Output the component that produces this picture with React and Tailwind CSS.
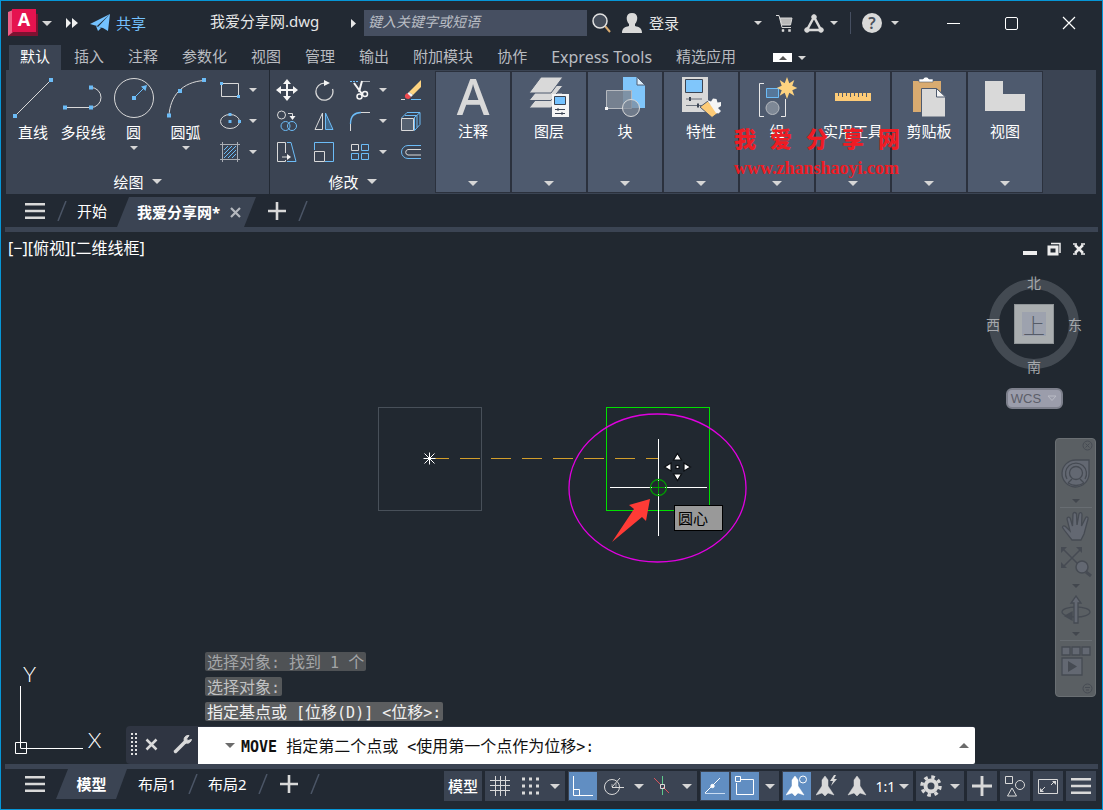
import React, { useState } from 'react';

const Caret = ({ size = 'sm', up = false, className = 'text-[#d6d6d6]' }) => {
  const w = size === 'lg' ? 10 : 8;
  const h = w / 2;
  return (
    <svg width={w} height={h} viewBox="0 0 10 5" fill="currentColor" className={`shrink-0 ${className}`} aria-hidden="true">
      <path d={up ? 'M5 0L10 5H0z' : 'M0 0H10L5 5z'} />
    </svg>
  );
};

const CaretButton = ({ label, size, className = '' }) => (
  <button type="button" aria-label={label} className={`flex items-center justify-center ${className}`}>
    <Caret size={size} />
  </button>
);

const Icon = ({ size = 22, children }) => (
  <svg width={size} height={size} viewBox={`0 0 ${size} ${size}`} fill="none" stroke="#d9d9d9" className="shrink-0" aria-hidden="true">
    {children}
  </svg>
);

const Menu = () => (
  <svg width="20" height="16" fill="#d9d9d9" aria-hidden="true">
    <path d="M0 0h20v2.500H0zM0 6.700h20v2.500H0zM0 13.500h20V16H0z" />
  </svg>
);

const Plus = ({ size = 18 }) => (
  <svg width={size} height={size} viewBox="0 0 18 18" fill="#d9d9d9" aria-hidden="true">
    <path d="M7.700 0h2.600v18H7.700zM0 7.700h18v2.600H0z" />
  </svg>
);

const Slash = () => (
  <svg width="10" height="20" stroke="#4b5566" strokeWidth="1.5" className="shrink-0" aria-hidden="true">
    <path d="M1 20L9 0" />
  </svg>
);

const blue = '#6cbcf7';

/* ---------- ribbon icons ---------- */

const drawTools = [
  {
    name: '直线',
    width: 'w-[46px]',
    icon: (
      <Icon size={40}>
        <path d="M2 38L38 2" />
        <path d="M0 36h4v4H0zM36 0h4v4h-4z" fill={blue} stroke="none" />
      </Icon>
    ),
  },
  {
    name: '多段线',
    width: 'w-[54px]',
    icon: (
      <Icon size={40}>
        <path d="M2 29.5H28A9.8 9.8 0 0 0 28 9.5" />
        <path d="M0 27.500h4v4H0zM26 27.500h4v4h-4zM26 7.500h4v4h-4z" fill={blue} stroke="none" />
      </Icon>
    ),
  },
  {
    name: '圆',
    width: 'w-[47px]',
    more: true,
    icon: (
      <Icon size={40}>
        <circle cx="20" cy="20" r="19.500" />
        <path d="M20 20L31 9" stroke={blue} />
        <path d="M18 18h4v4h-4zM33 7l-1.500 6L27 8.500z" fill={blue} stroke="none" />
      </Icon>
    ),
  },
  {
    name: '圆弧',
    width: 'w-[57px]',
    more: true,
    icon: (
      <Icon size={40}>
        <path d="M3 38C4 18 16 4 38 2.500" />
        <path d="M1 35.500h4v4H1zM12 11h4v4h-4zM36 0h4v4h-4z" fill={blue} stroke="none" />
      </Icon>
    ),
  },
];

const smallDraw = [
  {
    name: '矩形',
    icon: (
      <Icon>
        <path d="M2.500 4.500h17v13h-17z" />
        <path d="M1 3h3v3H1zM18 16h3v3h-3z" fill={blue} stroke="none" />
      </Icon>
    ),
  },
  {
    name: '椭圆',
    icon: (
      <Icon>
        <ellipse cx="11" cy="11.500" rx="9.500" ry="7" />
        <path d="M9.500 3h3v3h-3zM9.500 10h3v3h-3zM19 10h3v3h-3z" fill={blue} stroke="none" />
      </Icon>
    ),
  },
  {
    name: '图案填充',
    icon: (
      <Icon>
        <path d="M5 9l4-4M5 13L13 5M5 17L17 5M9 17l8-8M13 17l4-4" stroke={blue} />
        <path d="M3.500 1v20M18.500 1v20M1 3.500h20M1 18.500h20" stroke="#a9adb3" />
      </Icon>
    ),
  },
];

const modifyTools = [
  {
    name: '移动',
    icon: (
      <Icon>
        <path d="M11 3v16M3 11h16" stroke="#f5f5f5" strokeWidth="2" />
        <path d="M11 0l4 5H7zM11 22l4-5H7zM0 11l5-4v8zM22 11l-5-4v8z" fill="#f5f5f5" stroke="none" />
      </Icon>
    ),
  },
  {
    name: '旋转',
    icon: (
      <Icon>
        <path d="M12 4.200A8.500 8.500 0 1 0 19.500 10" strokeWidth="1.300" />
        <path d="M11 1l6 3-6 3z" fill="#f5f5f5" stroke="none" />
      </Icon>
    ),
  },
  {
    name: '修剪',
    more: true,
    icon: (
      <Icon>
        <path d="M1 2.500h9" stroke={blue} strokeDasharray="2 1" />
        <path d="M13 2.500h8" stroke="#a9adb3" />
        <path d="M5 4l8 11M13 2l-3 11" stroke="#f5f5f5" strokeWidth="2" />
        <circle cx="10.500" cy="17.500" r="2.500" stroke="#f5f5f5" strokeWidth="1.500" />
        <circle cx="16" cy="15" r="2.500" stroke="#f5f5f5" strokeWidth="1.500" />
      </Icon>
    ),
  },
  {
    name: '删除',
    icon: (
      <Icon>
        <path d="M9 13L21 1v7l-8 8z" fill="#fdd380" stroke="none" />
        <path d="M9 13l4 3-2 2-4-3z" fill="#f5f5f5" stroke="none" />
        <path d="M7 14l4 4-2 2q-5 0-4-4z" fill="#ef4a4f" stroke="none" />
        <path d="M1 20.500h4" />
        <path d="M11 20.500h10" stroke={blue} />
      </Icon>
    ),
  },
  {
    name: '复制',
    icon: (
      <Icon>
        <circle cx="5.500" cy="5" r="4" />
        <circle cx="9.500" cy="16" r="4.500" stroke={blue} />
        <circle cx="16" cy="16" r="4.500" stroke={blue} />
        <path d="M12 3.500h4.500V7" />
        <path d="M13.500 6h6l-3 4z" fill="#f5f5f5" stroke="none" />
      </Icon>
    ),
  },
  {
    name: '镜像',
    icon: (
      <Icon>
        <path d="M9.500 3v16.500H2z" />
        <path d="M12.500 3v16.500H20z" stroke={blue} fill="#41688a" />
      </Icon>
    ),
  },
  {
    name: '圆角',
    more: true,
    icon: (
      <Icon>
        <path d="M1.500 14C1.500 6 6 2.500 12 2.500" stroke={blue} strokeWidth="1.300" />
        <path d="M1.500 14v7M12 2.500h9" />
      </Icon>
    ),
  },
  {
    name: '分解',
    icon: (
      <Icon>
        <path d="M1.500 8.500h12v12h-12z" fill="#54606f" />
        <path d="M1.500 8L7 2.500h13L14 8M20 2.500v12l-5.500 6V8M5 5.500h12v12" stroke={blue} />
      </Icon>
    ),
  },
  {
    name: '拉伸',
    icon: (
      <Icon>
        <path d="M9.500 12V1.500h-8v19h8V19M6 16h6" />
        <path d="M11 1.500h4l5 19h-9" stroke={blue} />
        <path d="M11 13l4 3-4 3z" fill="#f5f5f5" stroke="none" />
      </Icon>
    ),
  },
  {
    name: '缩放',
    icon: (
      <Icon>
        <path d="M1.500 9V1.500h19v19H12" stroke={blue} />
        <path d="M1.500 10.500h10v10h-10z" />
      </Icon>
    ),
  },
  {
    name: '阵列',
    more: true,
    icon: (
      <Icon>
        <path d="M2.500 3.500h7v6h-7z" />
        <path d="M12.500 3.500h7v6h-7zM2.500 12.500h7v6h-7zM12.500 12.500h7v6h-7z" stroke={blue} />
      </Icon>
    ),
  },
  {
    name: '偏移',
    icon: (
      <Icon>
        <path d="M21 4.500H8a6.500 6.500 0 0 0 0 13h13" stroke={blue} />
        <path d="M21 8.500H8a2.800 2.800 0 0 0 0 5.500h13" />
      </Icon>
    ),
  },
];

const panels = [
  {
    name: '注释',
    icon: (
      <text x="20" y="38" textAnchor="middle" fill="#d9d9d9" fontFamily="Noto Sans, sans-serif" fontWeight="500" fontSize="50">A</text>
    ),
  },
  {
    name: '图层',
    icon: (
      <>
        <path d="M12 16h22L22 31H0z" fill="#d9d9d9" stroke="#4e5a6e" />
        <path d="M12 8.500h22L22 23.500H0z" fill="#d9d9d9" stroke="#4e5a6e" />
        <path d="M12 0h22L22 16H0z" fill="#d9d9d9" stroke="#4e5a6e" />
        <path d="M23 17h17v23H23z" fill="#f5f5f5" />
        <path d="M25.500 19.500h11v8h-11z" fill="#74c2ff" stroke="#3b4453" />
        <path d="M26 32.500h10M26 36.500h10M29 31v3M33 35v3" stroke="#3b4453" />
      </>
    ),
  },
  {
    name: '块',
    icon: (
      <>
        <path d="M18 0h14l8 8v23H18z" fill="#80c6fb" />
        <path d="M32 0v8h8z" fill="#dceefc" stroke="#4e5a6e" />
        <path d="M1.500 13.500h25v18h-25z" fill="#7e8896" fillOpacity=".85" stroke="#b5b9bf" />
        <circle cx="26" cy="31" r="8.500" fill="#7e8896" fillOpacity=".7" stroke="#d9d9d9" />
        <path d="M0 30h3v3H0z" fill="#f5f5f5" />
      </>
    ),
  },
  {
    name: '特性',
    icon: (
      <>
        <path d="M1 0h26v35H1z" fill="#d9d9d9" />
        <path d="M4.500 2.500h17v13h-17z" fill="#80c6fb" stroke="#3b4453" />
        <path d="M5 22h16M5 28.500h16" stroke="#6a717c" />
        <path d="M9 20v4M17 26.500v4" stroke="#3b4453" strokeWidth="2" />
        <path d="M19 30l8-6 10 12-6 4.500z" fill="#fdcb77" stroke="#4e5a6e" />
        <path d="M26 23l4 1.500 2-3 3.500.5 1 3.500 3.500-.5v4l-3 2 3 3-2.500 2.500-2.500-.5z" fill="#f5f5f5" />
      </>
    ),
  },
  {
    name: '组',
    icon: (
      <>
        <path d="M7 6.500H2.500v33H7M24 39.500h4.500V22" stroke="#e8e8e8" fill="none" />
        <path d="M9.500 11.500h12v9h-12z" fill="#56779a" stroke={blue} />
        <circle cx="15.500" cy="31" r="6.500" fill="#7e8896" stroke="#b5b9bf" />
        <path d="M30 0l2.300 6.200 5-3.200-2 5.700 5 2.300-5 2.300 2 5.400-5-3L30 22l-2.300-6.300-5 3 2-5.400-5-2.300 5-2.300-2-5.700 5 3.200z" fill="#fdd380" />
      </>
    ),
  },
  {
    name: '实用工具',
    icon: (
      <>
        <path d="M2 16h36v8H2z" fill="#fdcb77" />
        <path d="M5.500 16v3M9.500 16v4M13.500 16v3M17.500 16v4M21.500 16v3M25.500 16v4M29.500 16v3M33.500 16v4" stroke="#4e5a6e" />
      </>
    ),
  },
  {
    name: '剪贴板',
    icon: (
      <>
        <path d="M4 4h28v31H4z" fill="#d9ab70" />
        <path d="M10 5V2h4q3-4 6 0h4v3z" fill="#fff" stroke="#4e5a6e" strokeWidth=".6" />
        <path d="M12.500 11.500h15l9 8.500v20h-24z" fill="#d9d9d9" stroke="#4e5a6e" />
        <path d="M27.500 11.500v8.500h9z" fill="#f5f5f5" stroke="#4e5a6e" />
      </>
    ),
  },
  {
    name: '视图',
    icon: <path d="M0 4h18v13h22v17H0z" fill="#d9d9d9" />,
  },
];

const menuTabs = ['默认', '插入', '注释', '参数化', '视图', '管理', '输出', '附加模块', '协作', 'Express Tools', '精选应用'];

/* ---------- window sections ---------- */

const TitleBar = () => (
  <header className="flex h-11 items-center pl-[7px] pr-1 text-[15px] text-[#e6e6e6]">
    <button type="button" aria-label="应用程序菜单" className="flex items-center">
      <svg width="30" height="28" className="overflow-visible" aria-hidden="true">
        <path d="M4 2L30 5v22H0z" fill="#7d1231" />
        <path d="M0 3l5-2v22l-5 4z" fill="#f06088" />
        <path d="M4 0h24v23H4z" fill="#e5134f" />
        <text x="16" y="17" textAnchor="middle" fill="#fff" fontFamily="Open Sans, sans-serif" fontWeight="700" fontSize="18">A</text>
      </svg>
      <span className="ml-1"><Caret size="lg" /></span>
    </button>
    <button type="button" aria-label="快速访问工具栏" className="ml-3.5">
      <svg width="12" height="10" fill="#f0f0f0" aria-hidden="true"><path d="M0 0l5 5-5 5zM6 0l6 5-6 5z" /></svg>
    </button>
    <button type="button" className="ml-3 flex items-center gap-1.5 text-[#74c2ff]">
      <svg width="20" height="18" fill="#74c2ff" aria-hidden="true">
        <path d="M0 10L20 0 7 12zM8 13L20 0l-2 17-5-3zM6 12l2 5 3-3z" />
      </svg>
      共享
    </button>
    <h1 className="-mt-1 ml-16 w-[113px] text-[15px]">我爱分享网.dwg</h1>
    <button type="button" aria-label="展开搜索" className="ml-7">
      <svg width="5" height="9" fill="#e6e6e6" aria-hidden="true"><path d="M0 0l5 4.500L0 9z" /></svg>
    </button>
    <input
      type="search"
      aria-label="搜索"
      placeholder="键入关键字或短语"
      className="ml-2 h-[26px] w-[223px] bg-[#464f61] px-1 pb-1 text-[14px] italic text-white outline-none placeholder:text-[#b9bdc4]"
    />
    <button type="button" aria-label="查找" className="ml-[5px]">
      <svg width="20" height="20" fill="none" aria-hidden="true">
        <path d="M13 13l5 6" stroke="#d9ab70" strokeWidth="2" />
        <circle cx="8" cy="8" r="7" fill="#454d5a" stroke="#e0e0e0" strokeWidth="1.500" />
      </svg>
    </button>
    <button type="button" className="ml-2.5 flex items-center gap-[7px]">
      <svg width="20" height="20" fill="#d9d9d9" aria-hidden="true">
        <path d="M10 0c7 0 6 8 3 11v2c4 1 7 2 7 7H0c0-5 3-6 7-7v-2C4 8 3 0 10 0z" />
      </svg>
      登录
    </button>
    <div className="ml-auto flex items-center">
      <CaretButton label="登录选项" />
      <button type="button" aria-label="购物车" className="ml-[14px]">
        <svg width="17" height="18" fill="none" stroke="#d9d9d9" aria-hidden="true">
          <path d="M0 1.500h3l3 12h9" />
          <path d="M4 4h12l-1.500 7H6z" fill="#b9b9b9" />
          <path d="M6 15.500h2v2H6zM12.500 15.500h2v2h-2z" fill="#d9d9d9" strokeWidth=".5" />
        </svg>
      </button>
      <button type="button" aria-label="Autodesk App Store" className="ml-[11px]">
        <svg width="20" height="19" fill="#d9d9d9" stroke="#d9d9d9" aria-hidden="true">
          <path d="M10 3L3 16h14z" fill="none" strokeWidth="2.500" />
          <circle cx="10" cy="3" r="2.300" /><circle cx="3" cy="16" r="2.300" /><circle cx="17" cy="16" r="2.300" />
        </svg>
      </button>
      <CaretButton label="App Store 选项" className="ml-1.5" />
      <span className="ml-3 h-[22px] w-px bg-[#464f61]" />
      <button type="button" aria-label="帮助" className="ml-[11px] flex size-5 items-center justify-center rounded-full bg-[#d9d9d9] text-[16px] font-semibold text-[#4a505b]">?</button>
      <CaretButton label="帮助选项" className="ml-[9px]" />
    </div>
    <div className="ml-[25px] flex">
      <button type="button" aria-label="最小化" className="flex w-[58px] items-center justify-center"><span className="h-px w-[13px] bg-white" /></button>
      <button type="button" aria-label="最大化" className="flex w-[58px] items-center justify-center"><span className="size-[13px] rounded-xs border border-white" /></button>
      <button type="button" aria-label="关闭" className="flex w-[58px] items-center justify-center">
        <svg width="14" height="14" stroke="#fff" strokeWidth="1.200" aria-hidden="true"><path d="M1 1l12 12M13 1L1 13" /></svg>
      </button>
    </div>
  </header>
);

const MenuTabs = ({ active, onSelect }) => (
  <nav className="flex h-[25px] items-center gap-0.5 pl-2">
    {menuTabs.map((tab) => (
      <button
        key={tab}
        type="button"
        onClick={() => onSelect(tab)}
        className={`h-full whitespace-nowrap px-[11px] pb-0.5 ${/^[A-Z]/.test(tab) ? 'text-[16px]' : 'text-[15px]'} ${
          tab === active ? 'bg-[#3b4453] text-white' : 'text-[#b9bcc1]'
        }`}
      >
        {tab}
      </button>
    ))}
    <button type="button" aria-label="最小化面板" className="ml-6 flex h-[9px] w-[19px] items-center justify-center bg-white">
      <Caret up className="text-[#555]" />
    </button>
    <CaretButton label="面板选项" className="ml-1" />
  </nav>
);

const Ribbon = () => (
  <section className="relative mr-1.5 ml-[5px] flex h-[124px] bg-[#3b4453] text-[15px] leading-5 text-white">
    <div className="flex w-[264px] flex-col border-r border-[#222933]">
      <div className="flex flex-1 pl-1 pt-2">
        {drawTools.map((tool) => (
          <button key={tool.name} type="button" className={`flex flex-col items-center ${tool.width}`}>
            {tool.icon}
            <span className="mt-1 whitespace-nowrap">{tool.name}</span>
            {tool.more && <span className="mt-1 flex"><Caret /></span>}
          </button>
        ))}
        <div className="flex flex-col">
          {smallDraw.map((tool) => (
            <div key={tool.name} className="flex h-[31px]">
              <button type="button" aria-label={tool.name} className="flex w-8 justify-center pt-px">{tool.icon}</button>
              <CaretButton label={`${tool.name}选项`} className="h-6 w-3.5" />
            </div>
          ))}
        </div>
      </div>
      <button type="button" className="flex h-6 items-center justify-center gap-2 pb-0.5">绘图<Caret size="lg" /></button>
    </div>

    <div className="flex w-[165px] flex-col">
      <div className="grid flex-1 grid-cols-[34px_40px_46px_42px] grid-rows-[31px_31px_31px] pt-2">
        {modifyTools.map((tool) => (
          <div key={tool.name} className="flex justify-center">
            <button type="button" aria-label={tool.name} className="flex w-8 justify-center pt-px">{tool.icon}</button>
            {tool.more && <CaretButton label={`${tool.name}选项`} className="h-6 w-3.5" />}
          </div>
        ))}
      </div>
      <button type="button" className="flex h-6 items-center justify-center gap-2 pb-0.5">修改<Caret size="lg" /></button>
    </div>

    {panels.map((panel) => (
      <button key={panel.name} type="button" className="my-px flex w-[76px] flex-col items-center border border-[#2b313d] bg-[#4e5a6e] pt-[5px] pb-1.5">
        <svg width="40" height="40" className="overflow-visible" aria-hidden="true">{panel.icon}</svg>
        <span className="mt-1 whitespace-nowrap">{panel.name}</span>
        <span className="mt-auto"><Caret size="lg" /></span>
      </button>
    ))}

    {/* site stamp */}
    <div className="pointer-events-none absolute top-[54px] left-[728px] text-[#ee1c24]">
      <p className="flex gap-3.5 text-[22px] leading-7 font-black">
        {'我爱分享网'.split('').map((ch) => <span key={ch}>{ch}</span>)}
      </p>
      <p className="mt-1.5 font-['Liberation_Serif',serif] text-[18px] leading-5 font-bold">www.zhanshaoyi.com</p>
    </div>
  </section>
);

const FileTabs = () => (
  <nav className="flex h-[33px] items-center pt-px text-[15px] text-white">
    <button type="button" aria-label="文件菜单" className="ml-6"><Menu /></button>
    <span className="ml-3"><Slash /></span>
    <button type="button" className="ml-2.5">开始</button>
    <div className="ml-2.5 flex h-[30px] w-[139px] items-center self-end bg-[#3b4453] pl-5 font-bold [clip-path:polygon(12px_0,100%_0,127px_100%,0_100%)]">
      <button type="button">我爱分享网*</button>
      <button type="button" aria-label="关闭图形" className="ml-2.5">
        <svg width="11" height="11" stroke="#b4b8be" strokeWidth="2.200" aria-hidden="true"><path d="M1 1l9 9M10 1l-9 9" /></svg>
      </button>
    </div>
    <button type="button" aria-label="新图形" className="ml-3"><Plus /></button>
    <span className="ml-3"><Slash /></span>
  </nav>
);

const Drawing = () => (
  <svg className="absolute inset-0 size-full" fill="none" aria-hidden="true">
    <rect x="377.500" y="175.500" width="103" height="103" stroke="#485059" />
    <path d="M428 226.500H657" stroke="#d29e2b" strokeDasharray="20 11" />
    <path d="M422.500 226.500h12M428.500 220.500v12M423.500 221.500l10 10M433.500 221.500l-10 10" stroke="#fff" />
    <rect x="605.500" y="175.500" width="103" height="103" stroke="#00e000" />
    <ellipse cx="656.500" cy="256" rx="88.500" ry="74" stroke="#e000e0" strokeWidth="1.300" />
    <path d="M657.500 207v97M609 255.500h97" stroke="#fff" />
    <circle cx="657.500" cy="255.500" r="8" stroke="#00a000" strokeWidth="1.300" />
    <path d="M651 255.500h13M657.500 249v13" stroke="#00a000" />
    <path d="M649 267l-21 6 5 4-22 33 30-25 4 4z" fill="#ff3b36" />
    <g fill="#fff" stroke="#0b0e12" strokeWidth="1.200">
      <path d="M676.500 221.500l4 6.500h-8zM676.500 248.500l4-6.500h-8zM663.500 235l6.500-4v8zM689.500 235l-6.500-4v8z" />
      <rect x="675" y="233.500" width="3" height="3" />
    </g>
    {/* ucs axes */}
    <path d="M19.500 454v62M19.500 516.500H82M14.500 510.500h11v11h-11z" stroke="#fff" />
    <g fill="#fff" fontFamily="Lato, sans-serif" fontWeight="300" fontSize="22" textAnchor="middle">
      <text x="28.500" y="450">Y</text>
      <text x="93.500" y="516">X</text>
    </g>
  </svg>
);

const ViewCube = () => (
  <div className="absolute top-10 right-[18px] flex w-[100px] flex-col items-center font-['Noto_Sans_CJK_SC',sans-serif] text-[14px] leading-5 text-[#a5a8ac]">
    <div className="relative grid grid-cols-[18px_64px_18px] grid-rows-[20px_64px_20px] items-center justify-items-center">
      <span className="absolute inset-x-[5px] inset-y-[7px] rounded-full border-10 border-[#434a52]" />
      <button type="button" className="relative col-start-2">北</button>
      <button type="button" className="relative col-start-1 row-start-2">西</button>
      <button type="button" className="relative col-start-2 row-start-2 flex size-10 items-center justify-center border border-[#8f9497] bg-[#aaaeb0] text-[#565c68]">
        <span className="flex size-6 items-center justify-center bg-[#9da2ae] text-[22px] font-light">上</span>
      </button>
      <button type="button" className="relative col-start-3 row-start-2">东</button>
      <button type="button" className="relative col-start-2 row-start-3">南</button>
    </div>
    <button type="button" className="mt-3 flex h-[21px] w-[57px] items-center justify-center gap-1.5 rounded-md border-2 border-[#7d808c] bg-[#9b9dab] font-['Liberation_Sans',sans-serif] text-[13px] text-[#5b5e69]">
      WCS
      <svg width="10" height="7" fill="none" stroke="#b9bbc5" aria-hidden="true"><path d="M1 1h8L5 5.500z" /></svg>
    </button>
  </div>
);

const NavBar = () => (
  <aside className="absolute top-[206px] right-1.5 flex w-[41px] flex-col items-center rounded-sm border border-[#6a6f73] bg-[#5a5f63] text-[#464b53]">
    <button type="button" aria-label="关闭导航栏" className="mt-px mr-0.5 self-end">
      <svg width="11" height="11" fill="none" stroke="currentColor" aria-hidden="true"><circle cx="5.500" cy="5.500" r="4.500" /><path d="M3.500 3.500l4 4M7.500 3.500l-4 4" /></svg>
    </button>
    <button type="button" aria-label="全导航控制盘" className="mt-0.5 flex h-[42px] items-center">
      <svg width="30" height="30" fill="#636872" stroke="currentColor" strokeWidth="1.300" aria-hidden="true">
        <path d="M15 1h13v14A13.500 13.500 0 1 1 15 1z" />
        <path d="M24 20A10.500 10.500 0 1 0 6 20M7 24l4-4M23 24l-4-4M7 24q8 5 16 0" />
        <circle cx="15" cy="14" r="6.500" />
      </svg>
    </button>
    <button type="button" aria-label="控制盘选项" className="flex h-3 items-center"><Caret className="text-[#42474e]" /></button>
    <span className="h-px w-8 bg-[#686d72]" />
    <button type="button" aria-label="平移" className="flex h-9 items-center">
      <svg width="30" height="30" fill="#636872" stroke="currentColor" strokeWidth="1.300" aria-hidden="true">
        <path d="M11 29C8 25 3 19 1.500 16.500c0-2 2-2 3.500-.500l4 4L6 8c0-2 2.500-3 3.500 0l2 7L12 3c0-2 3-2 3.500 0l.5 11 2-11c.5-2 3-2 3 .500L20.500 15l4-8c1-2 3-1 2.500 1l-4 15-3 6z" />
      </svg>
    </button>
    <button type="button" aria-label="范围缩放" className="flex h-9 items-center">
      <svg width="32" height="32" fill="none" stroke="currentColor" strokeWidth="1.500" aria-hidden="true">
        <path d="M3 3l18 18M3 21L21 3" />
        <path d="M1 1h6L1 7zM22 1h-6l6 6zM1 22h6l-6-6z" fill="currentColor" stroke="none" />
        <circle cx="22" cy="21" r="6" fill="#636872" />
        <path d="M26 26l5 4" strokeWidth="3" />
      </svg>
    </button>
    <button type="button" aria-label="缩放选项" className="flex h-3 items-center"><Caret className="text-[#42474e]" /></button>
    <button type="button" aria-label="动态观察" className="flex h-9 items-center">
      <svg width="30" height="30" fill="#636872" stroke="currentColor" strokeWidth="1.300" aria-hidden="true">
        <ellipse cx="15" cy="17" rx="14" ry="5" fill="none" />
        <path d="M13 28V8h-3l5-7 5 7h-3v20z" />
        <path d="M4 21l7-4v8z" fill="currentColor" />
      </svg>
    </button>
    <button type="button" aria-label="动态观察选项" className="flex h-3 items-center"><Caret className="text-[#42474e]" /></button>
    <span className="h-px w-8 bg-[#686d72]" />
    <button type="button" aria-label="ShowMotion" className="flex h-10 items-center">
      <svg width="30" height="30" fill="#636872" stroke="currentColor" strokeWidth="1.300" aria-hidden="true">
        <path d="M1 1h8v8H1zM11 1h8v8h-8zM21 1h8v8h-8zM1 12h20v17H1z" />
        <path d="M7 15l9 5.500L7 26z" fill="currentColor" stroke="none" />
      </svg>
    </button>
    <button type="button" aria-label="自定义导航栏" className="mt-0.5 mr-0.5 mb-0.5 self-end">
      <svg width="11" height="11" fill="none" stroke="currentColor" aria-hidden="true"><circle cx="5.500" cy="5.500" r="4.500" /><path d="M3 4.500h5M4 7h3" /></svg>
    </button>
  </aside>
);

// latin characters use the narrower console face
const ConsoleText = ({ text }) =>
  text.split(/([\u4e00-\u9fff]+)/).map((part, i) =>
    i % 2 ? part : <span key={i} className="font-['DejaVu_Sans_Mono',monospace] text-[15px] whitespace-pre">{part}</span>
  );

const history = [
  { text: '选择对象: 找到 1 个', tone: 'text-[#a3a5a7] bg-[#4f5255]' },
  { text: '选择对象:', tone: 'text-[#c0c1c2] bg-[#55585a]' },
  { text: '指定基点或 [位移(D)] <位移>:', tone: 'text-[#f0f0f0] bg-[#5c5e60]' },
];

const CommandLine = () => (
  <div className="relative mt-auto mr-[127px] ml-[125px] font-['Noto_Sans_CJK_SC',sans-serif] text-[16px]">
    <div className="mb-[5px] ml-[79px] flex flex-col items-start gap-1.5">
      {history.map((line) => (
        <p key={line.text} className={`h-[19px] rounded-xs px-0.5 leading-[18px] whitespace-nowrap ${line.tone}`}>
          <ConsoleText text={line.text} />
        </p>
      ))}
    </div>
    <div className="flex h-[38px] rounded-sm bg-[#2f3542]">
      <div className="flex w-[72px] items-center pb-0.5 pl-[5px]">
        <svg width="7" height="22" fill="none" stroke="#e0e0e0" strokeWidth="2" strokeDasharray="2 2" aria-hidden="true"><path d="M1 0v22M5 0v22" /></svg>
        <button type="button" aria-label="关闭命令行" className="ml-[7px]">
          <svg width="13" height="13" stroke="#d9d9d9" strokeWidth="2.500" aria-hidden="true"><path d="M1.500 1.500l10 10M11.500 1.500l-10 10" /></svg>
        </button>
        <button type="button" aria-label="自定义命令行" className="ml-[15px]">
          <svg width="20" height="20" fill="none" stroke="#d9d9d9" aria-hidden="true">
            <path d="M2.500 17.500L12 8" strokeWidth="3.500" strokeLinecap="round" />
            <path d="M16 1.500c-3-.5-6 2-4.500 6 2 3 6 2 7-2l-3.500 1-1.500-1.500z" fill="#d9d9d9" />
          </svg>
        </button>
      </div>
      <div className="mt-px flex flex-1 items-center rounded-r-xs bg-white pr-1.5 pl-[27px] text-[#111]">
        <button type="button" aria-label="最近使用的命令"><Caret size="lg" className="text-[#6b6b6b]" /></button>
        <label htmlFor="command" className="ml-1.5 whitespace-nowrap">
          <b className="font-['DejaVu_Sans_Mono',monospace] text-[15px]">MOVE</b>
          <ConsoleText text=" 指定第二个点或 <使用第一个点作为位移>:" />
        </label>
        <input id="command" type="text" className="h-full min-w-0 flex-1 bg-transparent pl-2 outline-none" />
        <button type="button" aria-label="命令历史"><Caret size="lg" up className="text-[#6b6b6b]" /></button>
      </div>
    </div>
  </div>
);

const Canvas = () => (
  <main className="relative flex flex-1 flex-col bg-[#212830] text-white">
    <Drawing />
    <div className="relative flex px-[7px] pt-1 text-[16px] leading-6">
      <button type="button">[−]</button>
      <button type="button">[俯视]</button>
      <button type="button">[二维线框]</button>
      <div className="ml-auto flex items-center gap-2.5 pt-0.5 pr-[9px]">
        <button type="button" aria-label="最小化视口" className="flex h-3 w-[14px] items-end"><span className="h-1 w-full bg-[#ededed]" /></button>
        <button type="button" aria-label="还原视口">
          <svg width="15" height="14" fill="none" stroke="#ededed" strokeWidth="2" aria-hidden="true"><path d="M4 1.500h9V11" strokeWidth="1.500" /><path d="M2 5h8v7H2z" strokeWidth="3" /></svg>
        </button>
        <button type="button" aria-label="关闭视口">
          <svg width="14" height="12" stroke="#ededed" strokeWidth="2.500" aria-hidden="true"><path d="M3 2l8 8M11 2l-8 8" /><path d="M1 1h4M9 1h4M1 11h4M9 11h4" strokeWidth="1.500" /></svg>
        </button>
      </div>
    </div>
    <div role="tooltip" className="absolute top-[273px] left-[673px] h-[26px] w-[49px] border border-black bg-[#999] pl-[3px] text-[15px] leading-6 text-black">圆心</div>
    <ViewCube />
    <NavBar />
    <CommandLine />
  </main>
);

const StatusButton = ({ label, active = false, width = 'w-[30px]', children }) => (
  <button type="button" aria-label={label} className={`flex items-center justify-center ${width}`}>
    <span className={`flex size-7 items-center justify-center ${active ? 'bg-[#618ec2]' : ''}`}>{children}</span>
  </button>
);

const Person = ({ x = 0, fill = '#d9d9d9' }) => (
  <path d="M10 0l3 4v6l6 9-6-2-3 3-3-3-6 2 6-9V4z" fill={fill} stroke={fill} strokeWidth=".5" transform={`translate(${x} 1)`} />
);

const StatusBar = () => (
  <footer className="flex h-10 text-[15px] text-white">
    <nav className="flex h-[30px] items-center">
      <button type="button" aria-label="布局菜单" className="ml-6"><Menu /></button>
      <button type="button" className="ml-[11px] h-full w-[71px] bg-[#3b4453] font-bold [clip-path:polygon(12px_0,100%_0,60px_100%,0_100%)]">模型</button>
      <button type="button" className="ml-[11px] w-10 text-left whitespace-nowrap">布局1</button>
      <span className="ml-2.5"><Slash /></span>
      <button type="button" className="ml-2.5 w-10 text-left whitespace-nowrap">布局2</button>
      <span className="ml-2.5"><Slash /></span>
      <button type="button" aria-label="新建布局" className="ml-3"><Plus /></button>
      <span className="ml-3"><Slash /></span>
    </nav>
    <div className="mt-0.5 ml-auto flex h-[30px] gap-[3px] pr-1.5">
      <button type="button" className="w-[38px] bg-[#3b4453] font-medium">模型</button>
      <div className="flex w-20 bg-[#3b4453]">
        <StatusButton label="栅格"><Icon><path d="M6.500 1v20M11.500 1v20M16.500 1v20M1 5.500h20M1 10.500h20M1 15.500h20" /></Icon></StatusButton>
        <StatusButton label="捕捉">
          <Icon><path d="M3 4h17M3 11h17M3 18h17" strokeWidth="3" strokeDasharray="3 4" /></Icon>
        </StatusButton>
        <CaretButton label="捕捉选项" size="lg" className="w-5" />
      </div>
      <div className="flex w-[129px] bg-[#3b4453]">
        <StatusButton label="正交" active><Icon><path d="M1.500 1v19.500H21M1.500 14.500h6v6" stroke="#fff" /></Icon></StatusButton>
        <StatusButton label="极轴追踪" width="w-8"><Icon><circle cx="9" cy="12" r="7.500" /><path d="M9 12.500h12M9 12l8-9" /><path d="M9 12V9M13 12V8" strokeWidth=".7" /></Icon></StatusButton>
        <CaretButton label="极轴选项" size="lg" className="w-[18px]" />
        <StatusButton label="等轴测草图" width="w-7"><Icon><path d="M3 3l7 7M12 12l6 6" stroke="#d9545c" /><path d="M11.500 1v8M11.500 13v7" stroke="#5fc98c" /><path d="M9.500 9.500h4v4h-4z" /></Icon></StatusButton>
        <CaretButton label="草图选项" size="lg" className="w-[21px]" />
      </div>
      <div className="flex w-[79px] bg-[#3b4453]">
        <StatusButton label="对象捕捉追踪" active><Icon><path d="M1 18.500h20" stroke="#c9dcf2" /><path d="M1 18L16 3" stroke="#fff" /><circle cx="8.500" cy="11" r="1.700" fill="#fff" stroke="#fff" /></Icon></StatusButton>
        <StatusButton label="对象捕捉" active><Icon><path d="M7 4.500h12.500v15h-17V8" stroke="#fff" /><path d="M1.500 1.500h5v5h-5z" stroke="#fff" /></Icon></StatusButton>
        <CaretButton label="捕捉设置" size="lg" className="w-[19px]" />
      </div>
      <div className="flex w-[131px] bg-[#3b4453]">
        <StatusButton label="注释可见性" active><Icon><Person x={-1} fill="#fff" /><circle cx="17" cy="4.500" r="3.500" stroke="#fff" /></Icon></StatusButton>
        <StatusButton label="自动缩放"><Icon><Person x={-1} /><path d="M18 0l-4 6h3l-2 5 6-7h-3l2-4z" fill="#d9d9d9" stroke="none" /></Icon></StatusButton>
        <StatusButton label="注释比例"><Icon><Person x={1} /></Icon></StatusButton>
        <button type="button" className="flex flex-1 items-center justify-center gap-1 text-[14px]">1:1<Caret size="lg" /></button>
      </div>
      <div className="flex w-12 bg-[#3b4453]">
        <StatusButton label="切换工作空间">
          <Icon>
            <circle cx="11" cy="11" r="5.500" strokeWidth="4" />
            <circle cx="11" cy="11" r="9" strokeWidth="3.500" strokeDasharray="3.534 3.534" />
          </Icon>
        </StatusButton>
        <CaretButton label="工作空间选项" size="lg" className="w-[18px]" />
      </div>
      <div className="flex bg-[#3b4453]"><StatusButton label="注释监视器"><Plus size={20} /></StatusButton></div>
      <div className="flex bg-[#3b4453]"><StatusButton label="隔离对象"><Icon><path d="M1.500 1.500h7v7h-7zM8 13l4.500 8h-9z" /><circle cx="16" cy="10" r="4.500" /></Icon></StatusButton></div>
      <div className="flex bg-[#3b4453]">
        <StatusButton label="全屏显示">
          <Icon><path d="M1.500 4.500h19v14h-19zM8 12l-4 4M14 10l4-4" /><path d="M3 13v4h4zM19 10V6h-4z" fill="#d9d9d9" stroke="none" /></Icon>
        </StatusButton>
      </div>
      <div className="flex bg-[#3b4453]"><StatusButton label="自定义"><Menu /></StatusButton></div>
    </div>
  </footer>
);

const App = () => {
  const [activeTab, setActiveTab] = useState('默认');

  return (
    <div className="flex min-h-screen flex-col border border-[#0696d7] bg-[#222933] font-['Noto_Sans','Noto_Sans_CJK_SC',sans-serif]">
      <TitleBar />
      <MenuTabs active={activeTab} onSelect={setActiveTab} />
      <Ribbon />
      <FileTabs />
      <div className="mx-1 h-[5px] bg-[#3b4453]" />
      <Canvas />
      <div className="mx-1 h-[5px] bg-[#3b4453]" />
      <StatusBar />
    </div>
  );
};

export default App;
